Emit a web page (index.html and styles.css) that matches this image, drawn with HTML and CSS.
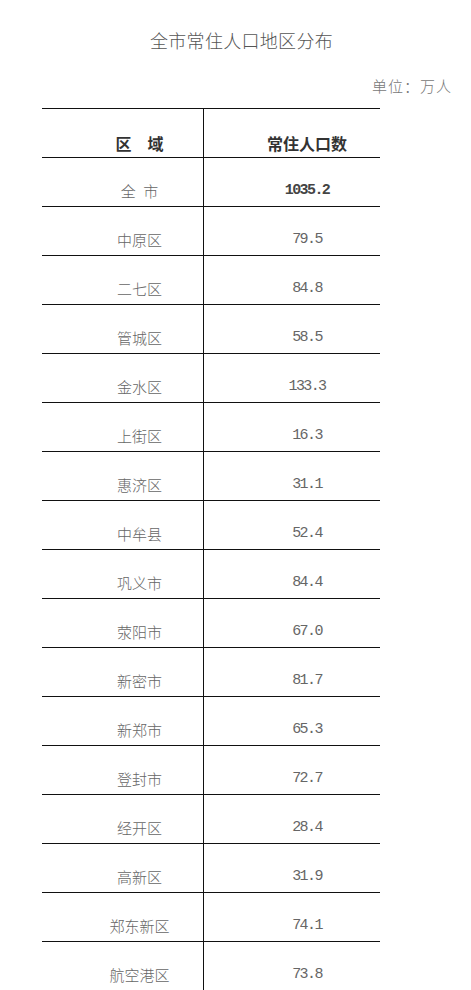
FILE: index.html
```html
<!DOCTYPE html>
<html lang="zh-CN">
<head>
<meta charset="utf-8">
<title>全市常住人口地区分布</title>
<link rel="stylesheet" href="styles.css">
</head>
<body>
<div class="page">
  <h1 class="title">全市常住人口地区分布</h1>
  <div class="unit">单位：万人</div>
  <div class="table">
    <div class="row head"><div class="c1">区　域</div><div class="c2">常住人口数</div></div>
    <div class="row total"><div class="c1">全&ensp;市</div><div class="c2 num">1035.2</div></div>
    <div class="row"><div class="c1">中原区</div><div class="c2 num">79.5</div></div>
    <div class="row"><div class="c1">二七区</div><div class="c2 num">84.8</div></div>
    <div class="row"><div class="c1">管城区</div><div class="c2 num">58.5</div></div>
    <div class="row"><div class="c1">金水区</div><div class="c2 num">133.3</div></div>
    <div class="row"><div class="c1">上街区</div><div class="c2 num">16.3</div></div>
    <div class="row"><div class="c1">惠济区</div><div class="c2 num">31.1</div></div>
    <div class="row"><div class="c1">中牟县</div><div class="c2 num">52.4</div></div>
    <div class="row"><div class="c1">巩义市</div><div class="c2 num">84.4</div></div>
    <div class="row"><div class="c1">荥阳市</div><div class="c2 num">67.0</div></div>
    <div class="row"><div class="c1">新密市</div><div class="c2 num">81.7</div></div>
    <div class="row"><div class="c1">新郑市</div><div class="c2 num">65.3</div></div>
    <div class="row"><div class="c1">登封市</div><div class="c2 num">72.7</div></div>
    <div class="row"><div class="c1">经开区</div><div class="c2 num">28.4</div></div>
    <div class="row"><div class="c1">高新区</div><div class="c2 num">31.9</div></div>
    <div class="row"><div class="c1">郑东新区</div><div class="c2 num">74.1</div></div>
    <div class="row"><div class="c1">航空港区</div><div class="c2 num">73.8</div></div>
  </div>
</div>
</body>
</html>
```
FILE: styles.css
```css
html, body {
  margin: 0;
  padding: 0;
  background: #ffffff;
}
body {
  font-family: "Noto Sans CJK SC", "Noto Sans", sans-serif;
  color: #666666;
  overflow: hidden;
}
.page {
  width: 471px;
  height: 990px;
  overflow: hidden;
}
.title {
  margin: 28px 0 0 0;
  padding-left: 12px;
  font-size: 18px;
  line-height: 24px;
  font-weight: 300;
  letter-spacing: 0.3px;
  color: #555555;
  text-align: center;
}
.unit {
  margin-top: 24px;
  padding-right: 19px;
  font-size: 15px;
  line-height: 20px;
  font-weight: 300;
  letter-spacing: 1px;
  color: #777777;
  text-align: right;
}
.table {
  margin: 12px 0 0 42px;
  width: 338px;
  border-top: 1px solid #111111;
}
.row {
  display: grid;
  grid-template-columns: 162px 176px;
  border-bottom: 1px solid #111111;
}
.row > div {
  height: 48px;
  box-sizing: border-box;
  padding-top: 23px;
  line-height: 20px;
  text-align: center;
  font-size: 15px;
  font-weight: 300;
  white-space: nowrap;
}
.c1 {
  border-right: 1px solid #111111;
  padding-left: 34px;
}
.c2 {
  padding-left: 30px;
}
.num {
  font-family: "Liberation Mono", monospace;
  font-size: 16px;
  letter-spacing: -1.6px;
  color: #666666;
}
.head > div {
  padding-top: 24px;
  font-size: 16px;
  font-weight: 700;
  color: #333333;
}
.total .num {
  font-weight: 700;
  color: #444444;
}
```
